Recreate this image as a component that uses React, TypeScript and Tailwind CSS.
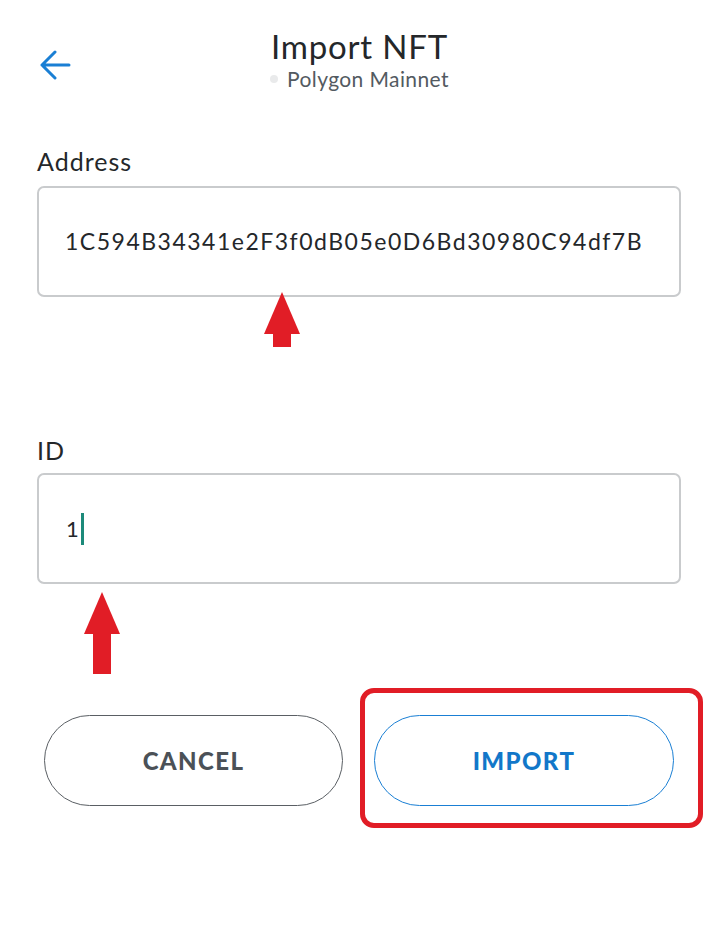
import React from 'react';

const RedArrow: React.FC<{ className?: string; shaft: number }> = ({ className, shaft }) => (
  <svg className={className} width="36" height={42 + shaft} viewBox={`0 0 36 ${42 + shaft}`}>
    <polygon points={`18,0 36,42 0,42`} fill="#e11d26" />
    <rect x="9" y="41" width="18" height={shaft + 1} fill="#e11d26" />
  </svg>
);

const App: React.FC = () => {
  return (
    <div className="relative w-[719px] h-[925px] bg-white text-[#24272a] font-['Lato','Noto_Sans',sans-serif] overflow-hidden">
      {/* Header */}
      <div className="relative mt-[26px] flex flex-col items-center">
        <button className="absolute left-[39px] top-[24px] text-[#1a7fd4]">
          <svg width="32" height="30" viewBox="0 0 32 30" fill="none">
            <path d="M16 2 L3 15 L16 28 M3 15 H30" stroke="currentColor" strokeWidth="3" strokeLinecap="round" strokeLinejoin="round" />
          </svg>
        </button>
        <h1 className="text-[33px] leading-[40px] tracking-[0.8px] text-[#24272a]">Import NFT</h1>
        <div className="flex items-center gap-[9px] text-[21px] leading-[26px] tracking-[0.4px] text-[#535a61]">
          <span className="w-[8px] h-[8px] rounded-full bg-[#e9eaeb]" />
          Polygon Mainnet
        </div>
      </div>

      {/* Address */}
      <div className="px-[37px] mt-[54px]">
        <label className="block text-[25px] leading-[30px] tracking-[1px] text-[#24272a]">Address</label>
        <div className="relative mt-[10px]">
          <div className="h-[111px] w-[644px] rounded-[7px] border-2 border-[#c9cbcd] flex items-center px-[26px] text-[23px] text-[#24272a] tracking-[1.5px]">
            1C594B34341e2F3f0dB05e0D6Bd30980C94df7B
          </div>
          <RedArrow className="absolute left-[227px] top-[106px]" shaft={13} />
        </div>
      </div>

      {/* ID */}
      <div className="px-[37px] mt-[138px]">
        <label className="block text-[25px] leading-[30px] tracking-[1px] text-[#24272a]">ID</label>
        <div className="relative mt-[8px]">
          <div className="h-[111px] w-[644px] rounded-[7px] border-2 border-[#c9cbcd] flex items-center px-[27px] text-[22px] text-[#24272a]">
            1
            <span className="ml-[2px] w-[3px] h-[32px] bg-[#1c8a7a]" />
          </div>
          <RedArrow className="absolute left-[47px] top-[119px]" shaft={40} />
        </div>
      </div>

      {/* Buttons */}
      <div className="flex gap-[31px] pl-[44px] mt-[131px]">
        <button className="w-[299px] h-[91px] rounded-full border-[1.5px] border-[#5a5f64] text-[24px] font-black text-[#4b5157] tracking-[1.4px]">
          CANCEL
        </button>
        <div className="relative">
          <div className="absolute left-[-14px] top-[-27px] right-[-29px] bottom-[-22px] rounded-[14px] border-[5px] border-[#e11d26]" />
          <button className="relative w-[300px] h-[91px] rounded-full border-[1.5px] border-[#1a7fd4] text-[24px] font-black text-[#1277c9] tracking-[1.4px]">
            IMPORT
          </button>
        </div>
      </div>
    </div>
  );
};

export default App;
